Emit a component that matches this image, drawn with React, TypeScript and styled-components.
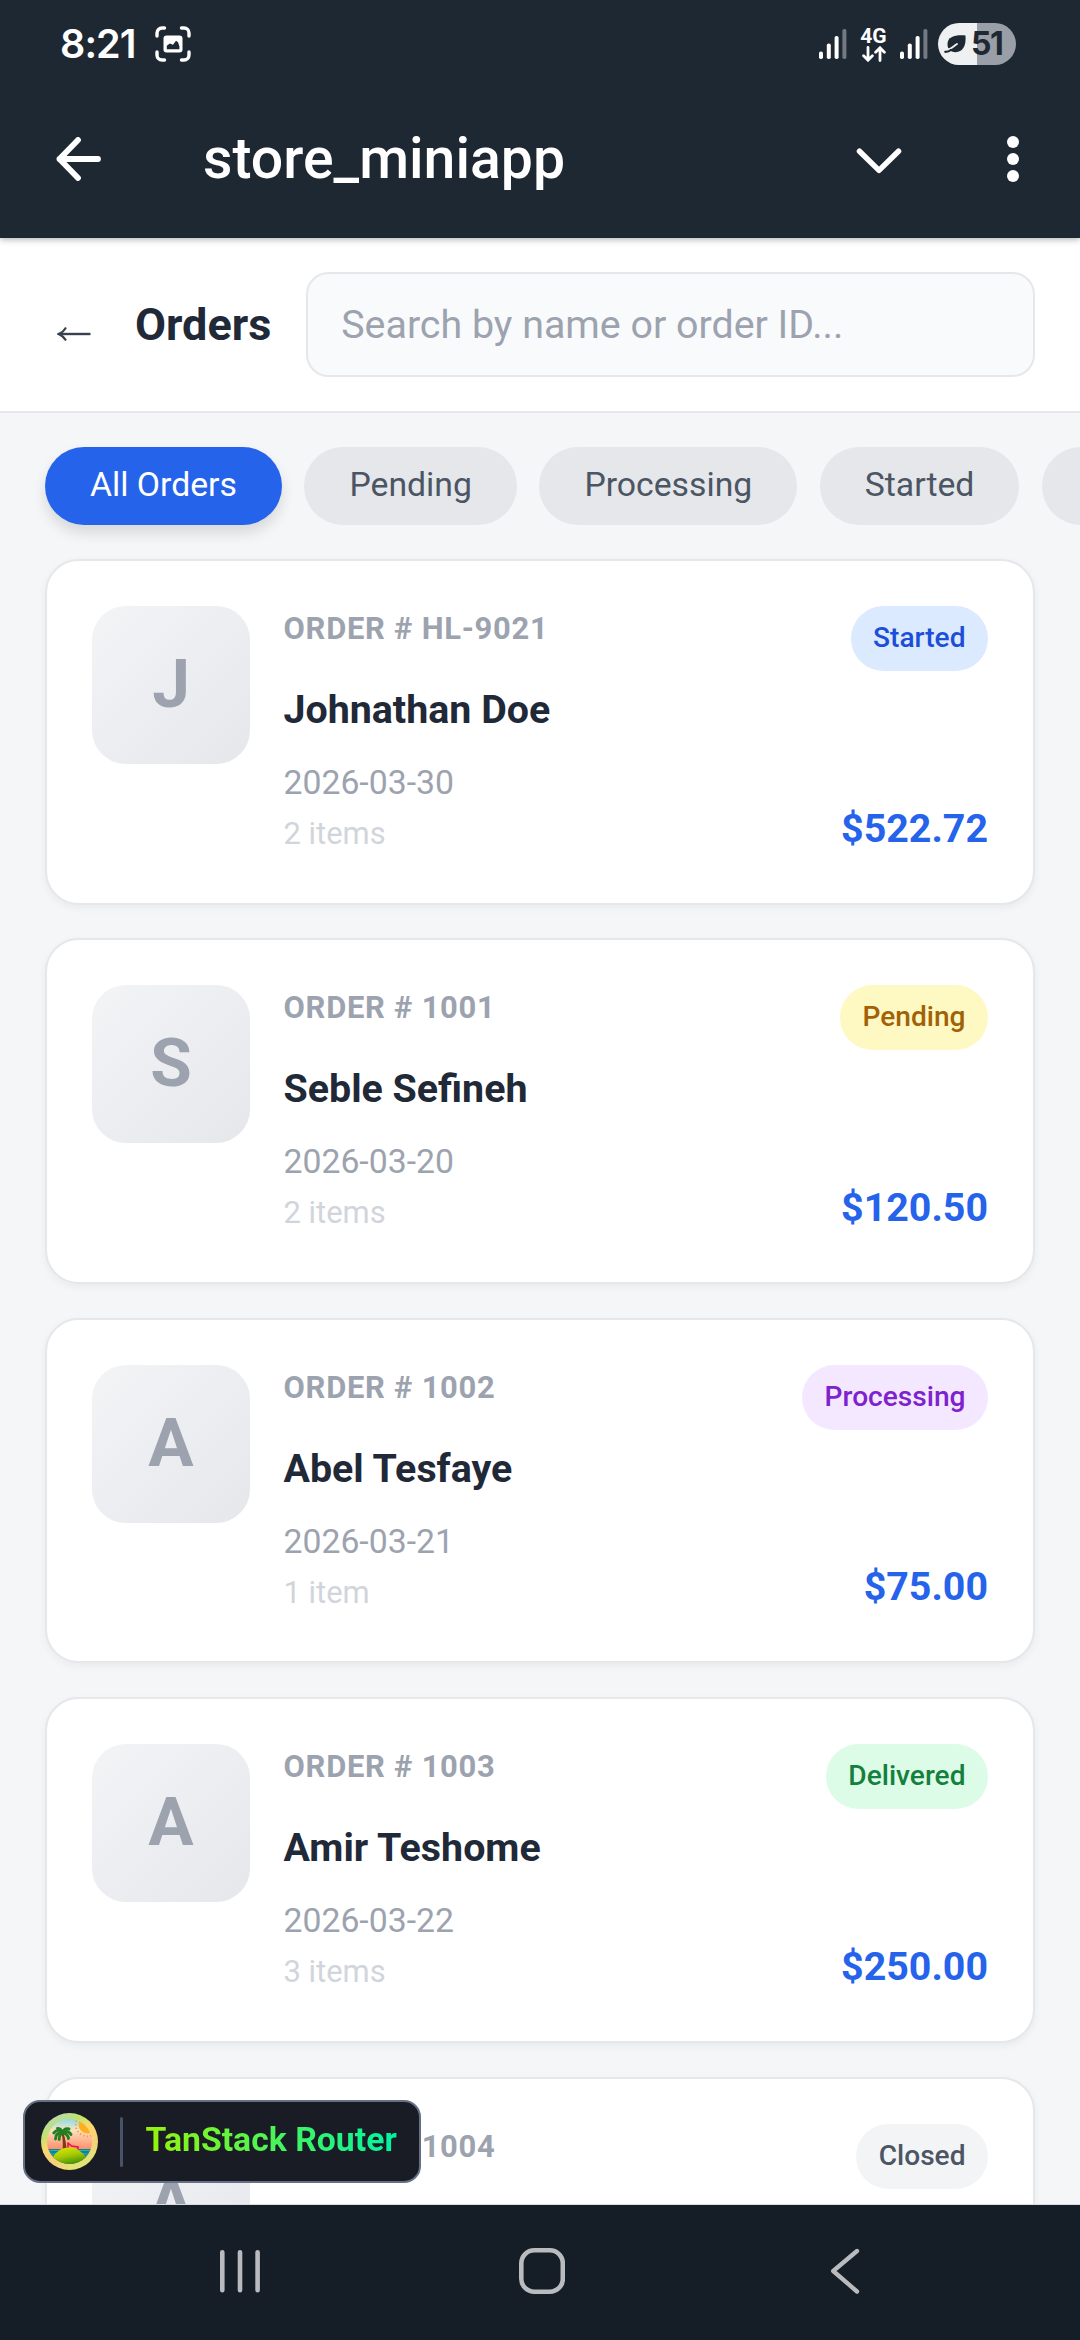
import React from "react";
import styled, { createGlobalStyle, css } from "styled-components";

/* One layout unit of the handset's 384-unit wide viewport. */
const u = (n: number) => `${n * 2.8125}px`;

const GlobalStyle = createGlobalStyle`
  * { box-sizing: border-box; }
  body {
    margin: 0;
    background: #f4f6f8;
    font-family: Roboto, "Liberation Sans", sans-serif;
  }
`;

const Screen = styled.div`
  width: 1080px;
  height: 2340px;
  display: flex;
  flex-direction: column;
  overflow: hidden;
`;

const Chrome = styled.div`
  flex: none;
  height: 238px;
  background: #1e2832;
  color: #fff;
  position: relative;
  z-index: 1;
  box-shadow: 0 1px 7px rgba(0, 0, 0, 0.35);
`;

const StatusBar = styled.div`
  height: 88px;
  padding: 0 64px 0 60px;
  display: flex;
  align-items: center;
  justify-content: space-between;
`;

const StatusGroup = styled.div<{ $gap: number }>`
  display: flex;
  align-items: center;
  gap: ${(p) => p.$gap}px;
`;

const Clock = styled.span`
  width: 78px;
  font-family: Inter, sans-serif;
  font-size: 39.5px;
  font-weight: 600;
  letter-spacing: -0.9px;
  line-height: 48px;
`;

const Network = styled.div`
  width: 27px;
  display: flex;
  flex-direction: column;
  align-items: center;
`;

const NetworkLabel = styled.span`
  font-size: 21px;
  font-weight: 700;
  line-height: 19px;
`;

const Battery = styled.div`
  width: 78px;
  height: 42px;
  margin-left: -3px;
  border-radius: 21px;
  background: linear-gradient(90deg, #eff0f2 50%, #9a9ea6 50%);
  color: #1e2832;
  display: flex;
  align-items: center;
  padding-left: 6px;
  gap: 4px;
`;

const BatteryLevel = styled.span`
  font-family: Inter, sans-serif;
  font-size: 32px;
  font-weight: 700;
  letter-spacing: -1.4px;
  line-height: 42px;
`;

const TitleBar = styled.div`
  height: 142px;
  padding: 0 61px 0 56px;
  display: flex;
  align-items: center;
`;

const AppTitle = styled.h1`
  flex: 1;
  margin: 0 0 0 102px;
  padding-bottom: 1px;
  font-size: 57.2px;
  font-weight: 500;
  line-height: 66px;
`;

const TitleActions = styled.div`
  display: flex;
  align-items: center;
  gap: 105px;
`;

const Page = styled.main`
  flex: 1;
  min-height: 0;
  overflow: hidden;
  border-bottom: 1px solid #d9dbdf;
  background: #f4f6f8;
`;

const OrdersHeader = styled.header`
  height: 175px;
  padding: 0 45px 0 57px;
  border-bottom: 2px solid #e5e7eb;
  background: #fff;
  display: flex;
  align-items: center;
`;

const Heading = styled.h2`
  margin: 0 0 0 44px;
  width: 170.500px;
  font-size: ${u(16)};
  font-weight: 700;
  line-height: 60px;
  color: #1f2937;
`;

const SearchInput = styled.input`
  flex: 1;
  min-width: 0;
  height: 105px;
  padding: 0 ${u(12)};
  border: 2px solid #e5e7eb;
  border-radius: ${u(8)};
  background: #f9fafc;
  font-family: inherit;
  font-size: ${u(14)};
  &::placeholder {
    color: #9ca3af;
    opacity: 1;
  }
`;

const Filters = styled.nav`
  display: flex;
  gap: ${u(8)};
  padding: 34px 45px;
  overflow: hidden;
`;

const Pill = styled.button<{ $active?: boolean }>`
  flex: none;
  height: 78px;
  padding: 0 ${u(16)} 3px;
  border: 0;
  border-radius: 39px;
  background: #e5e7eb;
  color: #4b5563;
  font: 400 ${u(12)} / 50px Roboto, sans-serif;
  ${(p) =>
    p.$active &&
    css`
      background: #2563eb;
      color: #fff;
      box-shadow: 0 8px 14px rgba(0, 0, 0, 0.12);
    `}
`;

const OrderList = styled.section`
  display: flex;
  flex-direction: column;
  gap: ${u(12)};
  padding: 0 45px;
`;

const Card = styled.article`
  flex: none;
  height: 345.650px;
  padding: 45px;
  border: 2px solid #e5e7eb;
  border-radius: ${u(12)};
  background: #fff;
  box-shadow: 0 3px 8px rgba(0, 0, 0, 0.05);
  display: flex;
`;

const Avatar = styled.div`
  flex: none;
  width: 158px;
  height: 158px;
  border-radius: ${u(12)};
  background: linear-gradient(135deg, #f3f4f6, #e5e7eb);
  color: #9ca3af;
  font-size: ${u(24)};
  font-weight: 700;
  line-height: 156px;
  text-align: center;
`;

const Info = styled.div`
  flex: 1;
  margin-left: 33.5px;
  display: flex;
  flex-direction: column;
`;

const OrderNumber = styled.span`
  font-size: ${u(11)};
  font-weight: 700;
  letter-spacing: 0.750px;
  line-height: 45px;
  color: #9ca3af;
`;

const Customer = styled.span`
  margin-top: 29px;
  font-size: ${u(14)};
  font-weight: 700;
  line-height: 59px;
  color: #1f2937;
`;

const OrderDate = styled.span`
  margin-top: 18px;
  font-size: ${u(12)};
  line-height: 51px;
  color: #9ca3af;
`;

const ItemCount = styled.span`
  margin-top: 3px;
  font-size: ${u(11)};
  line-height: 46px;
  color: #d1d5db;
`;

const Side = styled.div`
  display: flex;
  flex-direction: column;
  align-items: flex-end;
  justify-content: space-between;
`;

type Status = "Started" | "Pending" | "Processing" | "Delivered" | "Closed";

const tones: Record<Status, [string, string]> = {
  Started: ["#dbeafe", "#1d4ed8"],
  Pending: ["#fef9c3", "#a16207"],
  Processing: ["#f3e8ff", "#7e22ce"],
  Delivered: ["#dcfce7", "#15803d"],
  Closed: ["#f3f4f6", "#4b5563"],
};

const Badge = styled.span<{ $status: Status }>`
  height: 65px;
  padding: 0 22.5px;
  border-radius: 32.5px;
  background: ${(p) => tones[p.$status][0]};
  color: ${(p) => tones[p.$status][1]};
  font-size: ${u(10)};
  font-weight: 500;
  line-height: 63px;
`;

const Price = styled.span`
  font-size: ${u(14)};
  font-weight: 700;
  line-height: 58px;
  color: #2563eb;
`;

const Devtools = styled.button`
  position: absolute;
  z-index: 2;
  left: 23px;
  top: 2100px;
  width: 398px;
  height: 83px;
  padding: 0 0 0 16px;
  border: 2px solid #667085;
  border-radius: 17px;
  background: #191c24;
  display: flex;
  align-items: center;
`;

const Divider = styled.span`
  width: 3px;
  height: 50px;
  margin: 0 22.500px 0 22px;
  border-radius: 2px;
  background: #475467;
`;

const DevtoolsLabel = styled.span`
  padding-bottom: 4px;
  font: 700 ${u(12)} / 40px Roboto, sans-serif;
  white-space: nowrap;
  color: transparent;
  background: linear-gradient(90deg, #98f30c, #00f4a3);
  background-clip: text;
  -webkit-background-clip: text;
`;

const NavBar = styled.footer`
  flex: none;
  height: 135px;
  padding: 0 0 3px 216px;
  background: #151d26;
  display: flex;
  align-items: center;
`;

const NavKey = styled.svg<{ $offset?: number }>`
  flex: none;
  margin-left: ${(p) => p.$offset ?? 0}px;
  fill: none;
  stroke: #b9bbbe;
  stroke-linecap: round;
  stroke-linejoin: round;
`;

const CaptureIcon = () => (
  <svg width="36" height="36" viewBox="0 0 36 36" fill="none">
    <path
      d="M2 10V7a5 5 0 0 1 5-5h2.500M26.500 2H29a5 5 0 0 1 5 5v3M34 26v3a5 5 0 0 1-5 5h-2.500M9.500 34H7a5 5 0 0 1-5-5v-3"
      stroke="#fff"
      strokeWidth="3.400"
      strokeLinecap="round"
    />
    <rect x="8.500" y="9.500" width="19" height="17" rx="3" fill="#fff" />
    <path d="M11.800 23.300v-3.600l3-2.200 3.200 1.200 3-4 2 1.600 1.400 4v3z" fill="#1e2832" />
  </svg>
);

const SignalIcon = () => (
  <svg width="28" height="30" viewBox="0 0 28 30">
    <rect x="0" y="22.500" width="4" height="7.500" rx="1.800" fill="#fff" />
    <rect x="7.800" y="14.500" width="4" height="15.500" rx="1.800" fill="#fff" />
    <rect x="15.600" y="7" width="4" height="23" rx="1.800" fill="#fff" />
    <rect x="23.400" y="0" width="4" height="30" rx="1.800" fill="#737981" />
  </svg>
);

const DataArrows = () => (
  <svg width="24" height="16" viewBox="0 0 24 16" fill="none" stroke="#fff" strokeWidth="2.800" strokeLinecap="round">
    <path d="M6 1.500v12.500M1.600 9.800 6 14.200l4.400-4.400M18 14.500V2M13.600 6.200 18 1.800l4.400 4.400" />
  </svg>
);

const LeafIcon = () => (
  <svg width="23" height="20" viewBox="0 0 23 20">
    <path d="M21.500 1.500C13 .5 3.500 2 3.500 10c0 2 .3 3.300 1 4.400C8 19 13 18.800 16.500 16.800 21.500 13.500 21.800 7 21.500 1.500z" fill="#1e2832" />
    <path d="M4 15.500c3.500-.5 5.500-3.500 9-5.500" stroke="#eff0f2" strokeWidth="1.900" fill="none" strokeLinecap="round" />
    <path d="M1.300 17.800c2.700 0 4.200-.6 5.700-1.800" stroke="#1e2832" strokeWidth="2.200" fill="none" strokeLinecap="round" />
  </svg>
);

const IslandLogo = () => (
  <svg width="57" height="57" viewBox="0 0 57 57">
    <defs>
      <linearGradient id="ring" x1="0.15" y1="0" x2="0.7" y2="1">
        <stop offset="0" stopColor="#b5d6c6" />
        <stop offset=".28" stopColor="#bfe36c" />
        <stop offset=".45" stopColor="#fbd86e" />
        <stop offset=".7" stopColor="#f9d07a" />
        <stop offset="1" stopColor="#dbea72" />
      </linearGradient>
      <linearGradient id="sky" x1="0" y1="0" x2="0" y2="1">
        <stop offset=".08" stopColor="#7cdcf0" />
        <stop offset=".3" stopColor="#fbe3bd" />
        <stop offset=".65" stopColor="#ff8a68" />
      </linearGradient>
      <linearGradient id="sand" x1="0.2" y1="0" x2="0.6" y2="1">
        <stop offset="0" stopColor="#dfe800" />
        <stop offset=".5" stopColor="#a3c808" />
        <stop offset="1" stopColor="#3c8f00" />
      </linearGradient>
      <clipPath id="disc">
        <circle cx="28.500" cy="28.500" r="22.500" />
      </clipPath>
    </defs>
    <circle cx="28.500" cy="28.500" r="28.500" fill="url(#ring)" />
    <g clipPath="url(#disc)">
      <rect width="57" height="57" fill="url(#sky)" />
      <circle cx="46.500" cy="11.500" r="9" fill="#ffae1c" />
      <circle cx="46.500" cy="11.500" r="11.800" fill="none" stroke="#ff8f3a" strokeWidth="1.800" strokeDasharray="1.200 2.400" />
      <rect y="36" width="57" height="20" fill="#0b8494" />
      <path d="M0 37.500h57M0 41h57" stroke="#25b3bd" strokeWidth="1" />
      <path d="M26.500 29.500l4 3.500 6.500 1v3M27 30v6" fill="none" stroke="#e3164b" strokeWidth="1.600" />
      <path d="M20.500 20c1.500 6 1.500 12 1 19h4c0-7-1-13-3-19z" fill="#7a3c10" />
      <path d="M28.500 34.500c-8.500 0-14 5-17 10 3 5 9 7 17 7s14-2 17-7c-4-5-9-10-17-10z" fill="url(#sand)" />
      <g fill="none" stroke="#237f22" strokeWidth="2.900" strokeLinecap="round">
        <path d="M21.500 19.500Q17 15 12.800 20" />
        <path d="M21.500 19.500Q14.500 19.500 14.500 26" />
        <path d="M21.500 19.500Q18 22 18.200 26.500" />
        <path d="M21.500 19.500Q20 15.500 16.500 15.500" />
        <path d="M21.500 19.500Q23.500 14.500 28 16" />
        <path d="M21.500 19.500Q27 17 30 21.500" />
        <path d="M21.500 19.500Q27 21 27.500 25.500" />
      </g>
    </g>
  </svg>
);

const orders: { id: string; name: string; date: string; items: string; status: Status; total: string }[] = [
  { id: "HL-9021", name: "Johnathan Doe", date: "2026-03-30", items: "2 items", status: "Started", total: "$522.72" },
  { id: "1001", name: "Seble Sefineh", date: "2026-03-20", items: "2 items", status: "Pending", total: "$120.50" },
  { id: "1002", name: "Abel Tesfaye", date: "2026-03-21", items: "1 item", status: "Processing", total: "$75.00" },
  { id: "1003", name: "Amir Teshome", date: "2026-03-22", items: "3 items", status: "Delivered", total: "$250.00" },
  { id: "1004", name: "A", date: "", items: "", status: "Closed", total: "" },
];

const filters = ["All Orders", "Pending", "Processing", "Started", "Delivered"];

export default function App() {
  return (
    <Screen>
      <GlobalStyle />
      <Chrome>
        <StatusBar>
          <StatusGroup $gap={17}>
            <Clock>8:21</Clock>
            <CaptureIcon />
          </StatusGroup>
          <StatusGroup $gap={13}>
            <SignalIcon />
            <Network>
              <NetworkLabel>4G</NetworkLabel>
              <DataArrows />
            </Network>
            <SignalIcon />
            <Battery>
              <LeafIcon />
              <BatteryLevel>51</BatteryLevel>
            </Battery>
          </StatusGroup>
        </StatusBar>
        <TitleBar>
          <svg width="45" height="44" viewBox="0 0 45 44" fill="none" stroke="#fff" strokeWidth="5.800" strokeLinecap="round" strokeLinejoin="round">
            <path d="M42 22H3.500M22 3 3.500 22 22 41" />
          </svg>
          <AppTitle>store_miniapp</AppTitle>
          <TitleActions>
            <svg width="46" height="30" viewBox="0 0 46 30" fill="none" stroke="#fff" strokeWidth="5.500" strokeLinecap="round" strokeLinejoin="round">
              <path d="M3.500 7.200 23 26.400 42.500 7.200" />
            </svg>
            <svg width="12" height="46" viewBox="0 0 12 46" fill="#fff">
              <circle cx="6" cy="6" r="6" />
              <circle cx="6" cy="23" r="6" />
              <circle cx="6" cy="40" r="6" />
            </svg>
          </TitleActions>
        </TitleBar>
      </Chrome>
      <Page>
        <OrdersHeader>
          <svg width="34" height="32" viewBox="0 0 34 32" fill="none" stroke="#374151">
            <path d="M3 25h30.500" strokeWidth="2.400" />
            <path d="M9 18.500Q6.500 23 1.500 25 6.500 27 9 31.500" strokeWidth="2" />
          </svg>
          <Heading>Orders</Heading>
          <SearchInput placeholder="Search by name or order ID..." />
        </OrdersHeader>
        <Filters>
          {filters.map((f, i) => (
            <Pill key={f} $active={i === 0}>
              {f}
            </Pill>
          ))}
        </Filters>
        <OrderList>
          {orders.map((o) => (
            <Card key={o.id}>
              <Avatar>{o.name[0]}</Avatar>
              <Info>
                <OrderNumber>ORDER # {o.id}</OrderNumber>
                {o.date && (
                  <>
                    <Customer>{o.name}</Customer>
                    <OrderDate>{o.date}</OrderDate>
                    <ItemCount>{o.items}</ItemCount>
                  </>
                )}
              </Info>
              <Side>
                <Badge $status={o.status}>{o.status}</Badge>
                {o.total && <Price>{o.total}</Price>}
              </Side>
            </Card>
          ))}
        </OrderList>
      </Page>
      <Devtools>
        <IslandLogo />
        <Divider />
        <DevtoolsLabel>TanStack Router</DevtoolsLabel>
      </Devtools>
      <NavBar>
        <NavKey width="46" height="48" viewBox="0 0 46 48" strokeWidth="4.600">
          <path d="M6.300 5.300v38M24 5.300v38M41.600 5.300v38" />
        </NavKey>
        <NavKey $offset={257} width="46" height="48" viewBox="0 0 46 48" strokeWidth="4.600">
          <rect x="2.300" y="3.300" width="41.500" height="41.500" rx="13" />
        </NavKey>
        <NavKey $offset={265} width="46" height="48" viewBox="0 0 46 48" strokeWidth="4.300">
          <path d="M27 4 3.200 24 27 44.500" />
        </NavKey>
      </NavBar>
    </Screen>
  );
}
